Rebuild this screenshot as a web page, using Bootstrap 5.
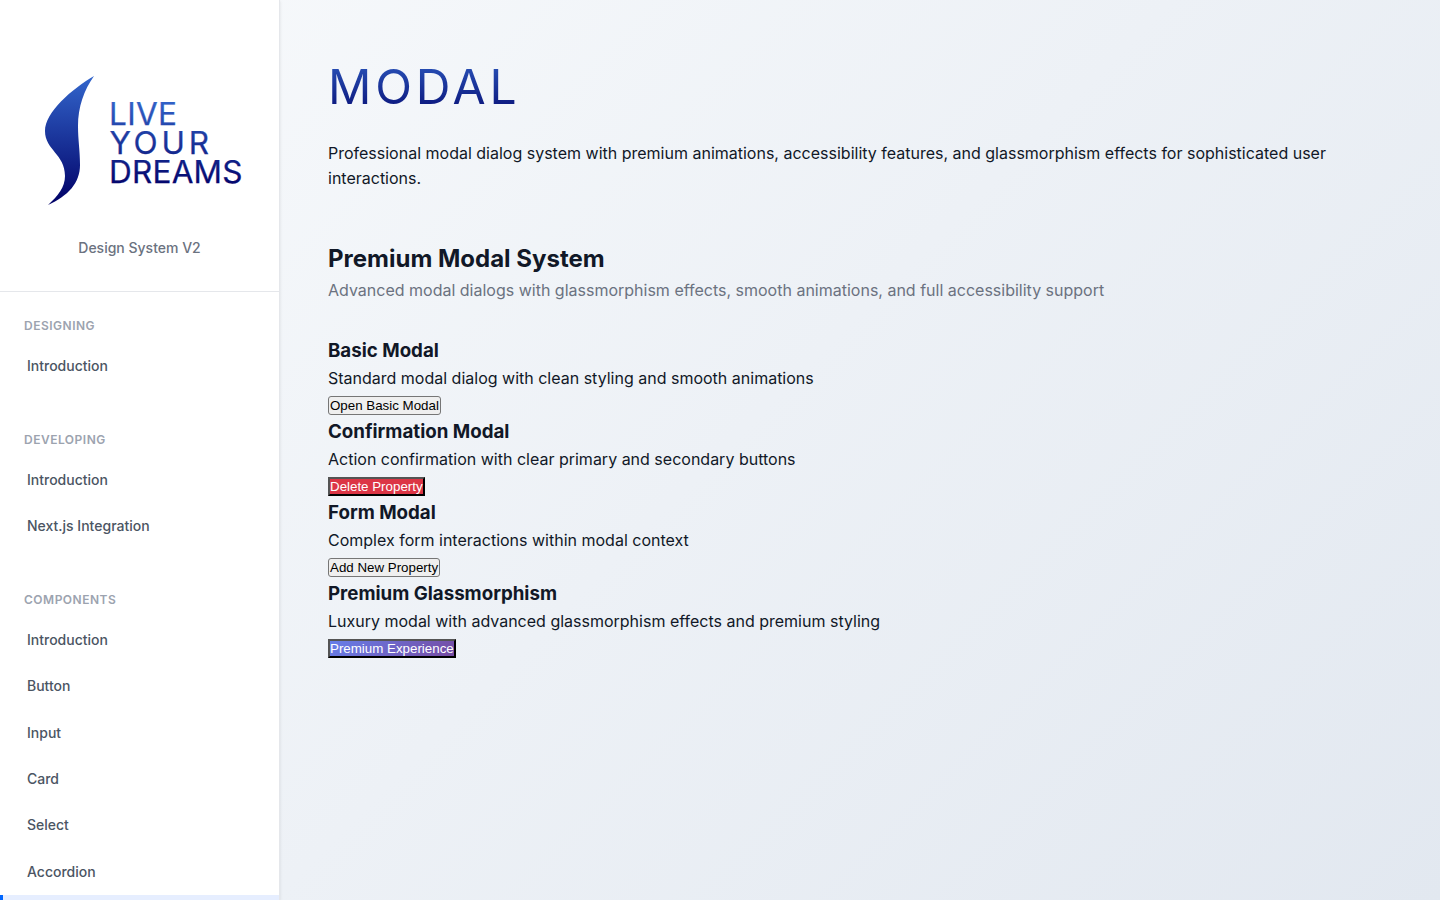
<!DOCTYPE html>
<html lang="en">
<head>
<meta charset="utf-8">
<meta name="viewport" content="width=device-width, initial-scale=1">
<title>Modal - Design System V2</title>
<link href="https://cdn.jsdelivr.net/npm/bootstrap@5.3.0/dist/css/bootstrap.min.css" rel="stylesheet">
<style>
  body { font-family: Inter, sans-serif; font-size: 16px; line-height: 1.6; color: #111827; }
  h1, h2, h3, p { margin: 0; line-height: 1.6; }
  .app-shell { background: linear-gradient(135deg, #f8fafc 0%, #e2e8f0 100%); }
  .sidebar { width: 280px; background: #fff; border-right: 1px solid #e5e7eb; box-shadow: 0 1px 3px rgba(0,0,0,.1); z-index: 1; }
  .brand { height: 292px; border-bottom: 1px solid #e5e7eb; padding-top: 70px; }
  .brand-sub { font-size: 14px; font-weight: 500; color: #6b7280; margin-top: 25px; }
  .nav-group { margin-bottom: 40px; }
  .nav-title { font-size: 12px; font-weight: 600; letter-spacing: .5px; color: #9ca3af; padding: 0 24px; margin-bottom: 8px; }
  .side-link { display: block; padding: 12px 24px; font-size: 14px; font-weight: 500; color: #4b5563; text-decoration: none; border-left: 3px solid transparent; }
  .side-link.active { background: #e6eeff; color: #0066ff; border-left-color: #0066ff; }
  .content-area { padding: 48px; }
  .page-title { font-size: 48px; font-weight: 400; letter-spacing: 3.84px; background: linear-gradient(180deg, #3366cc, #000066); -webkit-background-clip: text; background-clip: text; color: transparent; padding-top: 1px; margin-bottom: 15px; }
  .section-title { font-size: 24px; font-weight: 700; }
  .section-sub { color: #6b7280; margin-bottom: 32px; }
  .demo-title { font-size: 18.72px; font-weight: 700; }
  .demo-btn { font: 13.333px "Liberation Sans", Arial, sans-serif; padding: 0; color: #000; background-color: #efefef; }
  .plain-btn { border: 1px solid #767676; border-radius: 3px; padding: 1px; }
  .delete-btn { background: #dc3545; color: #fff; border: 2px outset #000; }
  .premium-btn { background: linear-gradient(135deg, #667eea 0%, #764ba2 100%); color: #fff; border: 2px outset #000; }
</style>
</head>
<body>
<div class="app-shell d-flex vh-100 overflow-hidden">
  <aside class="sidebar flex-shrink-0 overflow-hidden position-relative">
    <div class="brand text-center">
      <svg class="d-block mx-auto" width="210" height="142" viewBox="35 70 210 142" role="img" aria-label="Live Your Dreams">
        <defs>
          <linearGradient id="flame" x1="0" y1="0" x2="0" y2="1"><stop stop-color="#3366cc"/><stop offset="1" stop-color="#000066"/></linearGradient>
          <linearGradient id="words" gradientUnits="userSpaceOnUse" x1="0" y1="98" x2="0" y2="190"><stop stop-color="#3366cc"/><stop offset="1" stop-color="#000066"/></linearGradient>
        </defs>
        <path fill="url(#flame)" d="M94 76C72 89 45 112 45 131C45 150 65 154 65 176C65 187 58 196 48 205C68 196 80 183 80 165C80 150 78 140 78 126C78 107 84 90 94 76Z"/>
        <g fill="url(#words)" stroke="url(#words)" stroke-width=".25" font-family="Inter, sans-serif" font-size="31.500">
          <text x="109" y="125" textLength="68">LIVE</text>
          <text x="109.500" y="154" textLength="99.500">YOUR</text>
          <text x="109" y="183" textLength="133.500">DREAMS</text>
        </g>
      </svg>
      <div class="brand-sub">Design System V2</div>
    </div>
    <nav class="pt-4">
      <div class="nav-group">
        <div class="nav-title">DESIGNING</div>
        <a class="side-link" href="#">Introduction</a>
      </div>
      <div class="nav-group">
        <div class="nav-title">DEVELOPING</div>
        <a class="side-link" href="#">Introduction</a>
        <a class="side-link" href="#">Next.js Integration</a>
      </div>
      <div class="nav-group">
        <div class="nav-title">COMPONENTS</div>
        <a class="side-link" href="#">Introduction</a>
        <a class="side-link" href="#">Button</a>
        <a class="side-link" href="#">Input</a>
        <a class="side-link" href="#">Card</a>
        <a class="side-link" href="#">Select</a>
        <a class="side-link" href="#">Accordion</a>
        <a class="side-link active" href="#" aria-label="Modal">&nbsp;</a>
      </div>
    </nav>
  </aside>
  <main class="content-area flex-grow-1">
    <h1 class="page-title">MODAL</h1>
    <p class="mb-5">Professional modal dialog system with premium animations, accessibility features, and glassmorphism effects for sophisticated user interactions.</p>
    <section>
      <h2 class="section-title">Premium Modal System</h2>
      <p class="section-sub">Advanced modal dialogs with glassmorphism effects, smooth animations, and full accessibility support</p>
      <div>
        <h3 class="demo-title">Basic Modal</h3>
        <p>Standard modal dialog with clean styling and smooth animations</p>
        <button class="demo-btn plain-btn">Open Basic Modal</button>
      </div>
      <div>
        <h3 class="demo-title">Confirmation Modal</h3>
        <p>Action confirmation with clear primary and secondary buttons</p>
        <button class="demo-btn delete-btn">Delete Property</button>
      </div>
      <div>
        <h3 class="demo-title">Form Modal</h3>
        <p>Complex form interactions within modal context</p>
        <button class="demo-btn plain-btn">Add New Property</button>
      </div>
      <div>
        <h3 class="demo-title">Premium Glassmorphism</h3>
        <p>Luxury modal with advanced glassmorphism effects and premium styling</p>
        <button class="demo-btn premium-btn">Premium Experience</button>
      </div>
    </section>
  </main>
</div>
<script src="https://cdn.jsdelivr.net/npm/bootstrap@5.3.0/dist/js/bootstrap.bundle.min.js"></script>
</body>
</html>
